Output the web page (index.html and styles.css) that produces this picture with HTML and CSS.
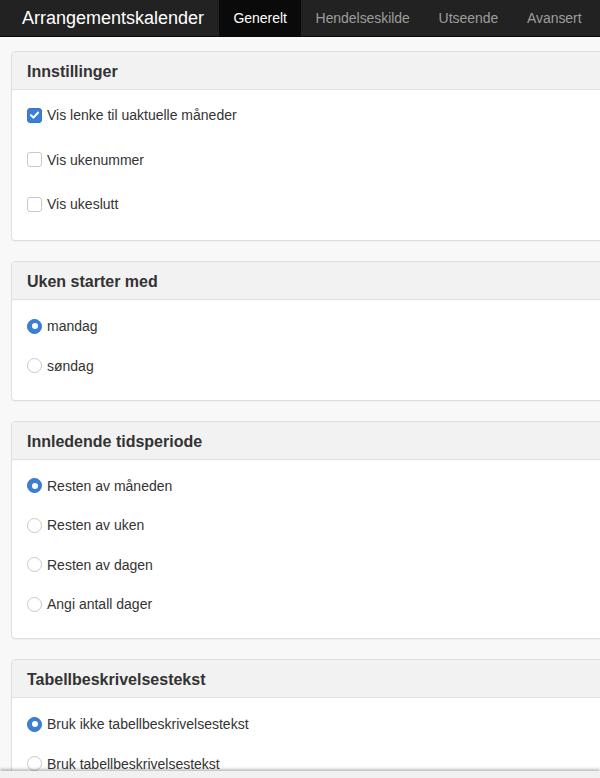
FILE: index.html
```html
<!DOCTYPE html>
<html lang="no">
<head>
<meta charset="utf-8">
<title>Arrangementskalender</title>
<link rel="stylesheet" href="styles.css">
</head>
<body>
<nav class="navbar">
  <div class="brand">Arrangementskalender</div>
  <ul class="tabs">
    <li class="tab active">Generelt</li>
    <li class="tab">Hendelseskilde</li>
    <li class="tab">Utseende</li>
    <li class="tab">Avansert</li>
  </ul>
</nav>
<main class="content">
  <section class="panel">
    <div class="panel-heading">Innstillinger</div>
    <div class="panel-body checks">
      <label class="option"><span class="box checked"><svg viewBox="0 0 14 14" width="14" height="14"><path d="M3.2 7.2 L5.9 9.8 L10.9 4.3" fill="none" stroke="#fff" stroke-width="2.2" stroke-linecap="round" stroke-linejoin="round"/></svg></span>Vis lenke til uaktuelle måneder</label>
      <label class="option"><span class="box"></span>Vis ukenummer</label>
      <label class="option"><span class="box"></span>Vis ukeslutt</label>
    </div>
  </section>
  <section class="panel">
    <div class="panel-heading">Uken starter med</div>
    <div class="panel-body radios">
      <label class="option"><span class="radio checked"></span>mandag</label>
      <label class="option"><span class="radio"></span>søndag</label>
    </div>
  </section>
  <section class="panel">
    <div class="panel-heading">Innledende tidsperiode</div>
    <div class="panel-body radios">
      <label class="option"><span class="radio checked"></span>Resten av måneden</label>
      <label class="option"><span class="radio"></span>Resten av uken</label>
      <label class="option"><span class="radio"></span>Resten av dagen</label>
      <label class="option"><span class="radio"></span>Angi antall dager</label>
    </div>
  </section>
  <section class="panel">
    <div class="panel-heading">Tabellbeskrivelsestekst</div>
    <div class="panel-body radios">
      <label class="option"><span class="radio checked"></span>Bruk ikke tabellbeskrivelsestekst</label>
      <label class="option"><span class="radio"></span>Bruk tabellbeskrivelsestekst</label>
    </div>
  </section>
</main>
<div class="footer-bar"></div>
</body>
</html>
```
FILE: styles.css
```css
html, body {
  margin: 0;
  padding: 0;
  overflow: hidden;
}
body {
  background: #f8f8f8;
  font-family: "Liberation Sans", Arial, Helvetica, sans-serif;
  color: #333;
  font-size: 14px;
  width: 600px;
  height: 778px;
}
.navbar {
  display: flex;
  align-items: stretch;
  height: 36px;
  background: #222;
  border-bottom: 1px solid #090909;
}
.brand {
  color: #fff;
  font-size: 18px;
  line-height: 36px;
  padding: 0 15px 0 22px;
  white-space: nowrap;
}
.tabs {
  display: flex;
  list-style: none;
  margin: 0;
  padding: 0;
}
.tab {
  color: #9d9d9d;
  font-size: 14px;
  line-height: 36px;
  padding: 0 14.4px;
  white-space: nowrap;
  letter-spacing: -0.05px;
}
.tab.active {
  color: #fff;
  background: #0a0a0a;
}
.content {
  padding: 14px 0 0 11px;
  width: 620px;
}
.panel {
  background: #fff;
  border: 1px solid #dedede;
  border-radius: 4px;
  margin-bottom: 20px;
  box-shadow: 0 1px 1px rgba(0,0,0,0.04);
}
.panel-heading {
  background: #f2f2f2;
  border-bottom: 1px solid #e0e0e0;
  border-radius: 3px 3px 0 0;
  font-size: 16px;
  font-weight: bold;
  color: #333;
  height: 37px;
  line-height: 39px;
  padding: 0 15px;
}
.panel-body {
  display: flex;
  flex-direction: column;
  padding: 15px 15px 25px;
}
.checks {
  gap: 24.5px;
  padding-bottom: 26px;
}
.radios { gap: 19.6px; }
.radios .option { position: relative; top: 1px; }
.option {
  display: flex;
  align-items: center;
  height: 20px;
  line-height: 20px;
  font-size: 14px;
  color: #333;
}
.box, .radio {
  box-sizing: border-box;
  width: 15px;
  height: 15px;
  margin-right: 5px;
  border: 1px solid #c9c9c9;
  background: #fff;
  flex: none;
  display: flex;
  align-items: center;
  justify-content: center;
}
.box {
  border-radius: 3px;
}
.box.checked {
  background: #3b7fd4;
  border-color: #3576c8;
}
.radio {
  border-radius: 50%;
}
.radio.checked {
  background: #3b7fd4;
  border-color: #3576c8;
}
.radio.checked::after {
  content: "";
  width: 6px;
  height: 6px;
  border-radius: 50%;
  background: #fff;
}
.footer-bar {
  position: fixed;
  left: 0;
  right: 0;
  bottom: 0;
  height: 7px;
  background: #f1f1f1;
  box-shadow: 0 -2px 3px rgba(0,0,0,0.25);
}
```
